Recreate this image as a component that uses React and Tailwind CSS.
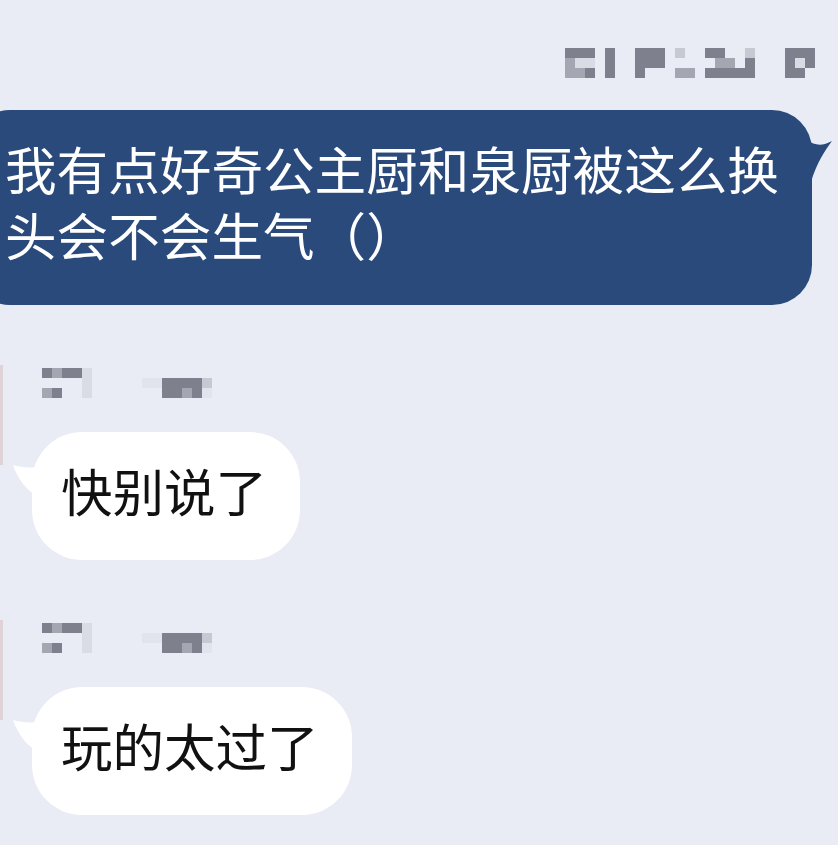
const CELL = {
  D: 'bg-[#7e808d]',
  M: 'bg-[#a4a6b2]',
  L: 'bg-[#c6c8d2]',
  V: 'bg-[#d9dbe5]',
  F: 'bg-[#e1e3ed]',
  '.': '',
};

// blurred / pixelated bits from the screenshot (time, sender name)
const TIME_ROWS = [
  'DDD.D..DDD.L..DD..L...DDD',
  'MVV.D..DDD.....MM.D...DVD',
  'MMD.D..D...MM.DDDDD...DD.',
];

const NAME_ROWS = [
  'DMDDV............',
  '....V.....FFDDDDL',
  'MD..V.......DDMDF',
];

function Pixels({ rows }) {
  return (
    <div className="flex flex-col">
      {rows.map((row, i) => (
        <div key={i} className="flex">
          {row.split('').map((c, j) => (
            <div key={j} className={`w-[10px] h-[10px] ${CELL[c]}`} />
          ))}
        </div>
      ))}
    </div>
  );
}

function IncomingMessage({ text }) {
  return (
    <div className="flex mt-[63px]">
      <div className="w-[3px] h-[100px] -mt-[3px] bg-[#e0d3d8] flex-shrink-0" />
      <div className="pl-[29px] flex flex-col items-start">
        <div className="ml-[10px]">
          <Pixels rows={NAME_ROWS} />
        </div>
        <div className="relative mt-[34px] bg-white rounded-[50px] pl-[29px] pr-[33px] pt-[24px] pb-[36px] text-[51.5px] leading-[68px] text-[#111111]">
          <svg className="absolute left-[-20px] top-[30px]" width="26" height="36" viewBox="0 0 26 36">
            <path d="M1 3 C 8 5, 16 6, 26 5 L 26 34 C 16 30, 6 18, 1 3 Z" fill="#ffffff" />
          </svg>
          {text}
        </div>
      </div>
    </div>
  );
}

export default function App() {
  return (
    <div className="w-[838px] h-[845px] overflow-hidden bg-[#e9ebf5] font-['Noto_Sans_CJK_SC','Noto_Sans',sans-serif]">
      <div className="flex justify-end pt-[48px] pr-[23px]">
        <Pixels rows={TIME_ROWS} />
      </div>

      <div className="relative mt-[32px] ml-[-30px] w-[842px] bg-[#294a7b] rounded-[40px] pl-[35px] pr-[20px] pt-[25px] pb-[38px] text-[51.6px] leading-[66px] text-white">
        <svg className="absolute right-[-21px] top-[28px]" width="26" height="44" viewBox="0 0 26 44">
          <path d="M0 2 C 8 8, 16 8, 25 3 C 19 11, 10 24, 4 44 L 0 44 Z" fill="#294a7b" />
        </svg>
        我有点好奇公主厨和泉厨被这么换头会不会生气（）
      </div>

      <IncomingMessage text="快别说了" />
      <IncomingMessage text="玩的太过了" />
    </div>
  );
}
